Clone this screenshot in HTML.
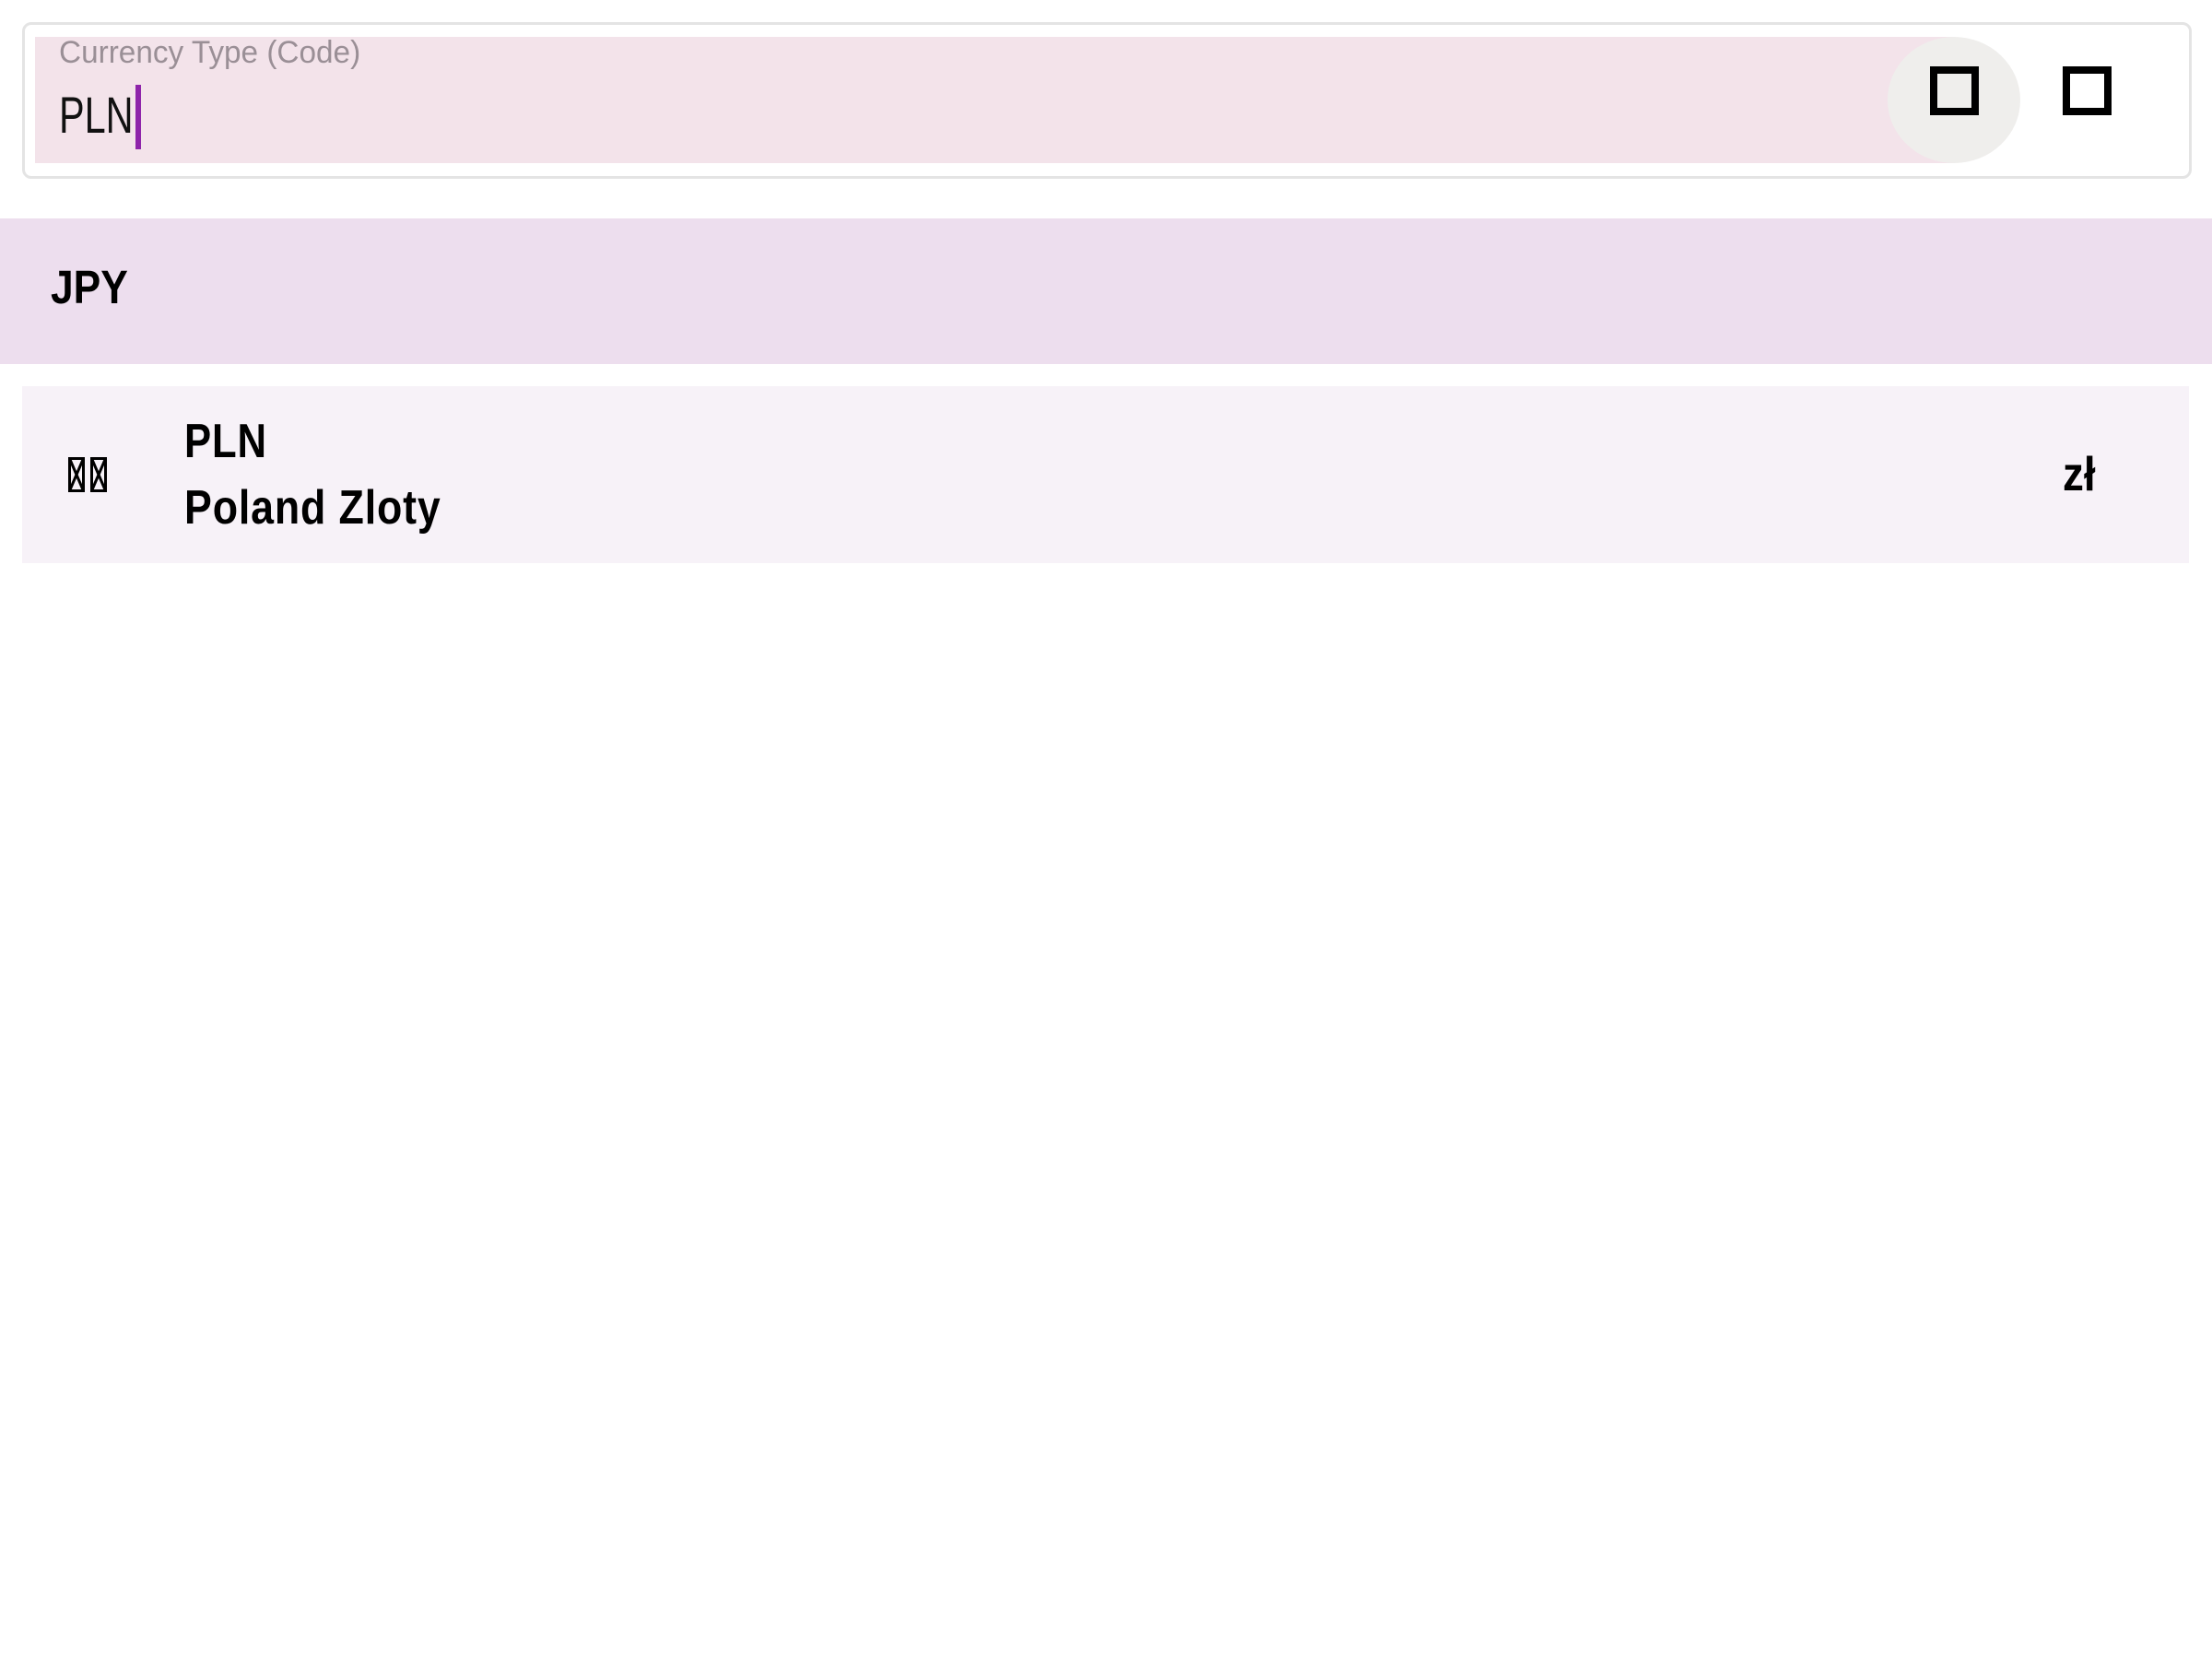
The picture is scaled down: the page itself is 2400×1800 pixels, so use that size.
<!DOCTYPE html>
<html><head><meta charset="utf-8"><style>
html,body{margin:0;padding:0;background:#fff;width:2400px;height:1800px;overflow:hidden;position:relative;font-family:"Liberation Sans",sans-serif;}
.a{position:absolute;white-space:nowrap;line-height:1;transform-origin:0 0;}
</style></head><body>
<div style="position:absolute;left:24px;top:24px;width:2348px;height:164px;border:3px solid #e4e4e4;border-radius:10px;"></div>
<div style="position:absolute;left:38px;top:40px;width:2082px;height:137px;background:#f3e3ea;"></div>
<div style="position:absolute;left:2048px;top:40px;width:144px;height:137px;border-radius:50%;background:#efeeec;"></div>
<div style="position:absolute;left:2094px;top:72px;width:37px;height:37px;border:8px solid #000;"></div>
<div style="position:absolute;left:2238px;top:72px;width:37px;height:37px;border:8px solid #000;"></div>
<div class="a" style="left:64px;top:40px;font-size:34px;color:#9a8f96;transform:scaleX(0.98);">Currency Type (Code)</div>
<div class="a" style="left:64px;top:97px;font-size:56px;color:#111;transform:scaleX(0.74);">PLN</div>
<div style="position:absolute;left:147px;top:92px;width:6px;height:70px;background:#8e24aa;"></div>

<div style="position:absolute;left:0;top:237px;width:2400px;height:158px;background:#eddeee;"></div>
<div class="a" style="left:55px;top:286px;font-size:51px;font-weight:bold;color:#000;transform:scaleX(0.87);">JPY</div>

<div style="position:absolute;left:24px;top:419px;width:2351px;height:192px;background:#f7f2f8;"></div>
<svg style="position:absolute;left:74px;top:496px" width="42" height="38" viewBox="0 0 42 38">
<g fill="none" stroke="#000" stroke-width="3"><rect x="1.5" y="1.5" width="15" height="35"/><path d="M1.5 1.5L16.5 36.5M16.5 1.5L1.5 36.5"/><rect x="25.5" y="1.5" width="15" height="35"/><path d="M25.5 1.5L40.5 36.5M40.5 1.5L25.5 36.5"/></g></svg>
<div class="a" style="left:200px;top:453px;font-size:52px;font-weight:bold;color:#000;transform:scaleX(0.84);letter-spacing:1px;">PLN</div>
<div class="a" style="left:200px;top:525px;font-size:52px;font-weight:bold;color:#000;transform:scaleX(0.86);letter-spacing:1px;">Poland Zloty</div>
<div class="a" style="left:2238px;top:489px;font-size:52px;font-weight:bold;color:#000;transform:scaleX(0.88);">zł</div>
</body></html>
